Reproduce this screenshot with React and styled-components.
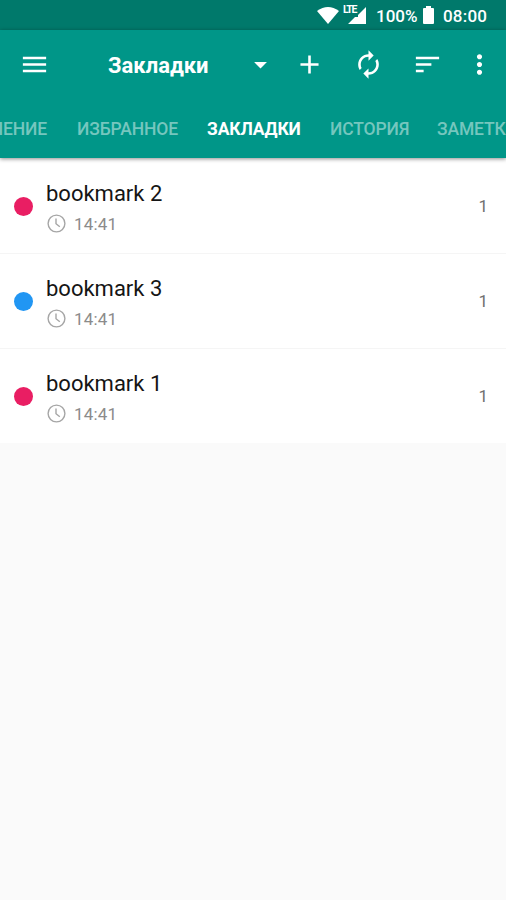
import React from "react";
import styled, { createGlobalStyle } from "styled-components";

const GlobalStyle = createGlobalStyle`
  * { box-sizing: border-box; }
  body { margin: 0; background: #fafafa; font-family: Roboto, "Liberation Sans", sans-serif; }
`;

const Screen = styled.div`
  width: 506px;
  height: 900px;
  overflow: hidden;
  background: #fafafa;
`;

const StatusBar = styled.div`
  display: flex;
  align-items: center;
  height: 30px;
  padding: 2px 0 0 316px;
  background: #00796b;
  color: #fff;
  font-size: 17px;
  font-weight: 500;
  line-height: 28px;
`;

const StatusIcon = styled.svg`
  flex: none;
  fill: #fff;
  margin-right: ${(p) => p.$after || 0}px;
`;

const StatusText = styled.span`
  white-space: nowrap;
  width: ${(p) => p.$width}px;
  letter-spacing: ${(p) => p.$spacing || 0}px;
`;

const Header = styled.header`
  position: relative;
  height: 128px;
  background: #009688;
  color: #fff;
  box-shadow: 0 1px 4px rgba(0, 0, 0, 0.45);
`;

const Toolbar = styled.div`
  display: flex;
  align-items: center;
  height: 69px;
  padding-left: 19px;
`;

const IconButton = styled.button`
  display: flex;
  flex: none;
  padding: 0;
  border: 0;
  background: none;
  color: #fff;
  margin-right: ${(p) => p.$after || 0}px;
  svg { width: 31px; height: 31px; fill: currentColor; }
`;

const Title = styled.h1`
  width: 137px;
  margin: 3px 0 0;
  font-size: 22px;
  font-weight: 700;
  line-height: 30px;
  white-space: nowrap;
`;

const Tabs = styled.nav`
  display: flex;
  height: 59px;
  overflow: hidden;
`;

const Tab = styled.a`
  display: flex;
  flex: none;
  justify-content: ${(p) => (p.$clipped ? "flex-end" : "flex-start")};
  width: ${(p) => p.$width}px;
  padding: ${(p) => (p.$clipped ? "0 15px 0 0" : "0 0 0 15px")};
  overflow: hidden;
  color: ${(p) => (p.$active ? "#fff" : "#76c6be")};
  font-size: 17.5px;
  font-weight: ${(p) => (p.$active ? 700 : 500)};
  letter-spacing: -0.15px;
  line-height: 61px;
  white-space: nowrap;
`;

const List = styled.ul`
  margin: 0;
  padding: 1px 0 0;
  background: #fff;
  list-style: none;
`;

const Row = styled.li`
  display: flex;
  align-items: center;
  height: 95px;
  padding: 0 18px 0 14px;
  border-bottom: 1px solid #f5f5f5;
  &:last-child { border-color: #fafafa; }
`;

const Dot = styled.span`
  flex: none;
  width: 19px;
  height: 19px;
  margin-right: 13px;
  border-radius: 50%;
  background: ${(p) => p.$color};
`;

const Details = styled.div`
  flex: 1;
  padding-top: 5px;
`;

const Name = styled.div`
  color: #151515;
  font-size: 22px;
  line-height: 30px;
`;

const Meta = styled.div`
  display: flex;
  align-items: center;
  height: 29px;
  color: #8b8b8b;
  font-size: 17px;
  letter-spacing: 0.2px;
  svg { margin: 0 8px 0 1px; }
`;

const Count = styled.span`
  color: #707070;
  font-size: 17px;
`;

const paths = {
  menu: "M3 18h18v-2H3v2zm0-5h18v-2H3v2zm0-7v2h18V6H3z",
  drop: "M7 10l5 5 5-5z",
  add: "M19 13h-6v6h-2v-6H5v-2h6V5h2v6h6v2z",
  sync: "M12 6v3l4-4-4-4v3c-4.42 0-8 3.58-8 8 0 1.57.46 3.03 1.24 4.26L6.7 14.8c-.45-.83-.7-1.79-.7-2.8 0-3.31 2.69-6 6-6zm6.76 1.74L17.3 9.2c.44.84.7 1.79.7 2.8 0 3.31-2.69 6-6 6v-3l-4 4 4 4v-3c4.42 0 8-3.58 8-8 0-1.57-.46-3.03-1.24-4.26z",
  sort: "M3 18h6v-2H3v2zM3 6v2h18V6H3zm0 7h12v-2H3v2z",
  more: "M12 8c1.1 0 2-.9 2-2s-.9-2-2-2-2 .9-2 2 .9 2 2 2zm0 2c-1.1 0-2 .9-2 2s.9 2 2 2 2-.9 2-2-.9-2-2-2zm0 6c-1.1 0-2 .9-2 2s.9 2 2 2 2-.9 2-2-.9-2-2-2z",
};

const Action = ({ icon, label, after }) => (
  <IconButton $after={after} aria-label={label}>
    <svg viewBox="0 0 24 24"><path d={paths[icon]} /></svg>
  </IconButton>
);

const LteBadge = styled.span`
  align-self: flex-start;
  width: 5px;
  margin-top: 2px;
  font-size: 10.5px;
  font-weight: 700;
  line-height: 12px;
  letter-spacing: -1.3px;
`;

const Clock = () => (
  <svg width="19" height="19" viewBox="0 0 19 19" fill="none" stroke="#a6a6a6" strokeWidth="1.4">
    <circle cx="9.5" cy="9.5" r="8.4" />
    <path d="M9 4.5v5.2l3.8 3" />
  </svg>
);

const bookmarks = [
  { name: "bookmark 2", time: "14:41", count: 1, color: "#e91e63" },
  { name: "bookmark 3", time: "14:41", count: 1, color: "#2196f3" },
  { name: "bookmark 1", time: "14:41", count: 1, color: "#e91e63" },
];

export default function App() {
  return (
    <Screen>
      <GlobalStyle />
      <StatusBar>
        <StatusIcon width="24" height="20" viewBox="0 0 24 20" $after={3}>
          <path d="M1 5Q12-3 23 5L12 18z" />
        </StatusIcon>
        <LteBadge>LTE</LteBadge>
        <StatusIcon width="18" height="20" viewBox="0 0 18 20" $after={10}>
          <path d="M0 18L7 11H10V9L18 1V18z" />
        </StatusIcon>
        <StatusText $width={46}>100%</StatusText>
        <StatusIcon width="13" height="20" viewBox="0 0 13 20" $after={8}>
          <path d="M4 0h5v2h2q1 0 1 1v14q0 1-1 1H2q-1 0-1-1V3q0-1 1-1h2z" />
        </StatusIcon>
        <StatusText $width={50} $spacing={0.2}>08:00</StatusText>
      </StatusBar>
      <Header>
        <Toolbar>
          <Action icon="menu" label="Меню" after={58} />
          <Title>Закладки</Title>
          <Action icon="drop" label="Выбрать список" after={18} />
          <Action icon="add" label="Добавить" after={28} />
          <Action icon="sync" label="Обновить" after={28} />
          <Action icon="sort" label="Сортировать" after={21} />
          <Action icon="more" label="Ещё" />
        </Toolbar>
        <Tabs>
          <Tab $width={62} $clipped>ОГЛАВЛЕНИЕ</Tab>
          <Tab $width={130}>ИЗБРАННОЕ</Tab>
          <Tab $width={123} $active>ЗАКЛАДКИ</Tab>
          <Tab $width={107}>ИСТОРИЯ</Tab>
          <Tab $width={120}>ЗАМЕТКИ</Tab>
        </Tabs>
      </Header>
      <List>
        {bookmarks.map((b) => (
          <Row key={b.name}>
            <Dot $color={b.color} />
            <Details>
              <Name>{b.name}</Name>
              <Meta><Clock />{b.time}</Meta>
            </Details>
            <Count>{b.count}</Count>
          </Row>
        ))}
      </List>
    </Screen>
  );
}
